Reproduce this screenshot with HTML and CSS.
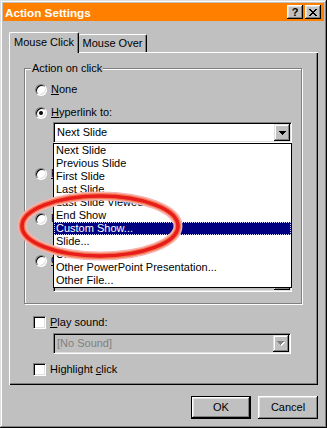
FILE: index.html
```html
<!DOCTYPE html>
<html>
<head>
<meta charset="utf-8">
<title>Action Settings</title>
<link rel="stylesheet" href="styles.css">
</head>
<body>
<div class="window">
  <div class="titlebar">
    <span class="title">Action Settings</span>
    <div class="tbtns">
      <div class="tbtn">?</div>
      <div class="tbtn">
        <svg width="8" height="7" viewBox="0 0 8 7" shape-rendering="crispEdges"><path d="M0 0h2v1h-2z M6 0h2v1h-2z M1 1h2v1h-2z M5 1h2v1h-2z M2 2h4v1h-4z M3 3h2v1h-2z M2 4h4v1h-4z M1 5h2v1h-2z M5 5h2v1h-2z M0 6h2v1h-2z M6 6h2v1h-2z" fill="#000"/></svg>
      </div>
    </div>
  </div>

  <div class="dlg">
    <div class="tabs">
      <div class="tab active">Mouse Click</div>
      <div class="tab inactive">Mouse Over</div>
    </div>

    <div class="panel">
      <div class="group">
        <span class="legend">Action on click</span>

        <div class="opt o-none"><span class="radio"></span><span><u>N</u>one</span></div>
        <div class="opt o-hyper"><span class="radio on"></span><span><u>H</u>yperlink to:</span></div>

        <div class="combo c-hyper">
          <span class="combo-text">Next Slide</span>
          <span class="drop"><svg width="7" height="4" viewBox="0 0 7 4" shape-rendering="crispEdges"><path d="M0 0h7v1h-7z M1 1h5v1h-5z M2 2h3v1h-3z M3 3h1v1h-1z" fill="#000"/></svg></span>
        </div>

        <div class="dropwrap">
          <div class="list">
            <div class="item">Next Slide</div>
            <div class="item">Previous Slide</div>
            <div class="item">First Slide</div>
            <div class="item">Last Slide</div>
            <div class="item">Last Slide Viewed</div>
            <div class="item">End Show</div>
            <div class="item sel">Custom Show...</div>
            <div class="item">Slide...</div>
            <div class="item">URL...</div>
            <div class="item">Other PowerPoint Presentation...</div>
            <div class="item">Other File...</div>
          </div>
        </div>

        <div class="opt o-prog"><span class="radio"></span><span><u>R</u>un program:</span></div>
        <div class="opt o-macro"><span class="radio"></span><span>R<u>u</u>n macro:</span></div>
        <div class="opt o-obj"><span class="radio"></span><span><u>O</u>bject action:</span></div>

        <div class="combo disabled c-obj">
          <span class="combo-text"></span>
          <span class="drop"><svg width="8" height="5" viewBox="0 0 8 5" shape-rendering="crispEdges"><path d="M1 1h7v1h-7z M2 2h5v1h-5z M3 3h3v1h-3z M4 4h1v1h-1z" fill="#fff"/><path d="M0 0h7v1h-7z M1 1h5v1h-5z M2 2h3v1h-3z M3 3h1v1h-1z" fill="#808080"/></svg></span>
        </div>
      </div>

      <div class="chk c-play"><span class="check"></span><span><u>P</u>lay sound:</span></div>
      <div class="combo disabled c-sound">
        <span class="combo-text">[No Sound]</span>
        <span class="drop"><svg width="8" height="5" viewBox="0 0 8 5" shape-rendering="crispEdges"><path d="M1 1h7v1h-7z M2 2h5v1h-5z M3 3h3v1h-3z M4 4h1v1h-1z" fill="#fff"/><path d="M0 0h7v1h-7z M1 1h5v1h-5z M2 2h3v1h-3z M3 3h1v1h-1z" fill="#808080"/></svg></span>
      </div>
      <div class="chk c-high"><span class="check"></span><span>Highlight <u>c</u>lick</span></div>
    </div>

    <div class="buttons">
      <div class="btn default">OK</div>
      <div class="btn">Cancel</div>
    </div>
  </div>

  <svg class="annot" width="327" height="428" viewBox="0 0 327 428">
    <ellipse cx="100" cy="226" rx="78" ry="30" fill="none" stroke="#f7b2b2" stroke-width="9"/>
    <ellipse cx="100" cy="226" rx="78" ry="30" fill="none" stroke="#f27a4e" stroke-width="6"/>
    <ellipse cx="100" cy="226" rx="78" ry="30" fill="none" stroke="#e81c1c" stroke-width="3.5"/>
  </svg>
</div>
</body>
</html>
```

FILE: styles.css
```css
* { box-sizing: border-box; }

html, body {
  margin: 0;
  padding: 0;
}

body {
  width: 327px;
  height: 428px;
  overflow: hidden;
  background: #c0c0c0;
  font-family: "Liberation Sans", Arial, sans-serif;
  font-size: 11px;
  line-height: 13px;
  color: #000;
}

.window {
  position: relative;
  width: 327px;
  height: 428px;
  padding: 3px;
  background: #c0c0c0;
  box-shadow: inset -1px -1px #000, inset 1px 1px #dfdfdf,
              inset -2px -2px #808080, inset 2px 2px #fff;
}

/* title bar */
.titlebar {
  height: 18px;
  background: #ff8000;
  display: flex;
  align-items: center;
  justify-content: space-between;
  padding: 0 3px 0 2px;
}

.title {
  color: #fff;
  font-weight: bold;
  font-size: 11.7px;
}

.tbtns {
  display: flex;
  gap: 2px;
}

.tbtn {
  width: 16px;
  height: 14px;
  background: #c0c0c0;
  box-shadow: inset -1px -1px #000, inset 1px 1px #fff,
              inset -2px -2px #808080, inset 2px 2px #dfdfdf;
  display: flex;
  align-items: center;
  justify-content: center;
  font-weight: bold;
  font-size: 11px;
  line-height: 11px;
}

/* dialog body */
.dlg {
  padding: 11px 6px 0 6px;
}

.tabs {
  display: flex;
  align-items: flex-end;
  height: 20px;
}

.tab {
  display: flex;
  align-items: center;
  justify-content: center;
  border-top: 1px solid #fff;
  border-right: 1px solid #000;
  border-radius: 2px 2px 0 0;
  box-shadow: inset -1px 0 #808080;
  background: #c0c0c0;
  white-space: nowrap;
}

.tab.active {
  position: relative;
  z-index: 1;
  width: 70px;
  height: 21px;
  margin-bottom: -1px;
  padding-bottom: 2px;
  border-left: 1px solid #fff;
}

.tab.inactive {
  width: 68px;
  height: 18px;
}

.panel {
  height: 333px;
  padding: 16px 0 0 15px;
  box-shadow: inset 1px 1px #fff, inset -1px -1px #000, inset -2px -2px #808080;
  display: flex;
  flex-direction: column;
  align-items: flex-start;
}

/* group box */
.group {
  width: 278px;
  height: 236px;
  border: 1px solid #808080;
  box-shadow: inset 1px 1px #fff, 1px 1px #fff;
  display: flex;
  flex-direction: column;
  align-items: flex-start;
}

.legend {
  height: 13px;
  margin: -7px 0 0 6px;
  padding: 0 1px;
  background: #c0c0c0;
  white-space: nowrap;
}

.opt, .chk {
  display: flex;
  align-items: center;
  gap: 4px;
  height: 13px;
  white-space: nowrap;
}

.opt { margin-left: 10px; }

.o-none { margin-top: 8px; }
.o-hyper { margin-top: 10px; }
.o-prog { margin-top: 24px; }
.o-macro { margin-top: 32px; }
.o-obj { margin-top: 29px; }

.radio {
  position: relative;
  flex: none;
  width: 12px;
  height: 12px;
  border-radius: 50%;
  background: #fff;
  border: 1px solid;
  border-color: #808080 #fff #fff #808080;
  box-shadow: inset 1px 1px #000, inset -1px -1px #dfdfdf;
}

.radio.on::after {
  content: "";
  position: absolute;
  left: 3px;
  top: 3px;
  width: 4px;
  height: 4px;
  border-radius: 50%;
  background: #000;
}

.check {
  flex: none;
  width: 13px;
  height: 13px;
  background: #fff;
  border: 1px solid;
  border-color: #808080 #fff #fff #808080;
  box-shadow: inset 1px 1px #000, inset -1px -1px #dfdfdf;
}

/* combo boxes */
.combo {
  flex: none;
  width: 239px;
  height: 21px;
  margin-left: 28px;
  padding: 1px;
  background: #fff;
  border: 1px solid;
  border-color: #808080 #fff #fff #808080;
  box-shadow: inset 1px 1px #000, inset -1px -1px #dfdfdf;
  display: flex;
  align-items: center;
  justify-content: space-between;
}

.combo.disabled {
  background: #c0c0c0;
  color: #808080;
}

.combo-text {
  padding-left: 2px;
  white-space: nowrap;
}

.drop {
  flex: none;
  width: 16px;
  height: 17px;
  background: #c0c0c0;
  box-shadow: inset -1px -1px #000, inset 1px 1px #dfdfdf,
              inset -2px -2px #808080, inset 2px 2px #fff;
  display: flex;
  align-items: center;
  justify-content: center;
}

.c-hyper { margin-top: 3px; }
.c-obj { margin-top: 4px; }

/* dropdown list overlay */
.dropwrap {
  position: relative;
  height: 0;
  width: 100%;
}

.list {
  position: absolute;
  top: 0;
  left: 28px;
  z-index: 2;
  width: 239px;
  background: #fff;
  border: 1px solid #000;
}

.item {
  height: 13px;
  line-height: 13px;
  padding-left: 2px;
  white-space: nowrap;
}

.item.sel {
  background: #000080;
  color: #fff;
  outline: 1px dotted #d8d8ff;
  outline-offset: -1px;
}

/* lower options */
.c-play {
  margin: 12px 0 0 9px;
}

.c-sound {
  margin: 4px 0 0 29px;
  width: 238px;
}

.c-high {
  margin: 9px 0 0 9px;
}

/* buttons */
.buttons {
  display: flex;
  justify-content: flex-end;
  gap: 7px;
  margin-top: 11px;
}

.btn {
  width: 60px;
  height: 23px;
  background: #c0c0c0;
  box-shadow: inset -1px -1px #000, inset 1px 1px #fff,
              inset -2px -2px #808080, inset 2px 2px #dfdfdf;
  display: flex;
  align-items: center;
  justify-content: center;
}

.btn.default {
  border: 1px solid #000;
}

/* red annotation ellipse */
.annot {
  position: absolute;
  left: 0;
  top: 0;
  z-index: 5;
  pointer-events: none;
}
```
